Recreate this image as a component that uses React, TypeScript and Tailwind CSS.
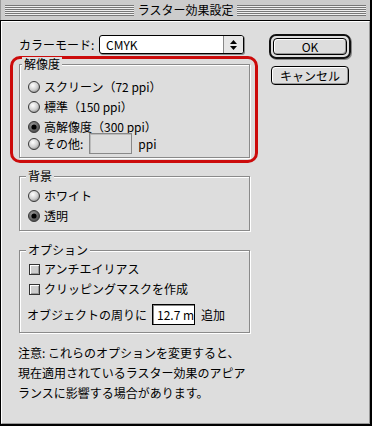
import React from "react";

const Radio = ({ checked = false }: { checked?: boolean }) => (
  <svg width="12" height="12" viewBox="0 0 12 12" className="shrink-0">
    <defs>
      <radialGradient id="rgOff" cx="40%" cy="35%" r="70%">
        <stop offset="0" stopColor="#ffffff" />
        <stop offset="0.6" stopColor="#d0d0d0" />
        <stop offset="1" stopColor="#8a8a8a" />
      </radialGradient>
      <radialGradient id="rgOn" cx="40%" cy="35%" r="70%">
        <stop offset="0" stopColor="#a0a0a0" />
        <stop offset="1" stopColor="#444444" />
      </radialGradient>
    </defs>
    <circle cx="6" cy="6" r="5.5" fill={checked ? "url(#rgOn)" : "url(#rgOff)"} stroke="#3a3a3a" strokeWidth="1" />
    {checked && <circle cx="6" cy="6" r="2.6" fill="#000" />}
  </svg>
);

const Checkbox = () => (
  <div className="w-[11px] h-[11px] shrink-0 border border-[#333] bg-[#cccccc] shadow-[inset_1px_1px_0_#fff,inset_-1px_-1px_0_#999]" />
);

const Group = ({
  title,
  titleClass,
  className,
  children,
}: {
  title: string;
  titleClass: string;
  className: string;
  children: React.ReactNode;
}) => (
  <div className={`relative border border-[#8a8a8a] shadow-[inset_1px_1px_0_#fff,1px_1px_0_#fff] ${className}`}>
    <span className={`absolute -top-[8px] bg-[#dddddd] px-[2px] leading-[14px] ${titleClass}`}>{title}</span>
    {children}
  </div>
);

const Btn = ({ className, children }: { className: string; children: React.ReactNode }) => (
  <div
    className={`flex items-center justify-center border border-black rounded-[4px] bg-[#dddddd] shadow-[inset_1px_1px_0_#fff,inset_-1px_-1px_0_#999] ${className}`}
  >
    {children}
  </div>
);

const Stripes = () => (
  <div className="flex-1 h-[11px] flex flex-col justify-between bg-[#eeeeee]">
    <div className="h-px bg-[#777]" />
    <div className="h-px bg-[#777]" />
    <div className="h-px bg-[#777]" />
    <div className="h-px bg-[#777]" />
    <div className="h-px bg-[#777]" />
    <div className="h-px bg-[#777]" />
  </div>
);

export default function App() {
  return (
    <div className="w-[372px] h-[426px] bg-[#dddddd] flex flex-col text-[12px] text-black font-['Noto_Sans_CJK_JP','Noto_Sans',sans-serif] leading-[14px]">
      {/* title bar */}
      <div className="h-[20px] shrink-0 bg-[#cccccc] border-l border-[#999] border-r-2 border-r-black flex items-center pl-[4px] pr-[4px]">
        <Stripes />
        <span className="px-[4px] leading-[20px]">ラスター効果設定</span>
        <Stripes />
      </div>
      <div className="h-px shrink-0 bg-black" />
      {/* body */}
      <div className="flex-1 flex flex-col border-l border-black border-r-2 border-r-black border-b-2 border-b-black">
        <div className="flex-1 flex flex-col border-l border-t border-white border-r border-b border-r-[#999] border-b-[#999]">
          <div className="flex pl-[8px] pt-[12px]">
            {/* left column */}
            <div className="w-[248px] flex flex-col">
              <div className="mt-px flex items-center h-[19px] pl-[9px]">
                <span className="w-[80px] whitespace-nowrap">カラーモード:</span>
                <div className="w-[145px] h-[19px] flex border border-black rounded-[3px] bg-white shadow-[1px_1px_0_#888]">
                  <div className="flex-1 pl-[6px] leading-[17px]">CMYK</div>
                  <div className="w-[20px] border-l border-[#888] bg-[#e6e6e6] rounded-r-[2px] flex items-center justify-center">
                    <svg width="7" height="10" viewBox="0 0 7 10">
                      <polygon points="3.5,0 7,4 0,4" fill="#000" />
                      <polygon points="0,6 7,6 3.5,10" fill="#000" />
                    </svg>
                  </div>
                </div>
              </div>
              <div className="mt-[2px] w-[248px] h-[107px] border-[3px] border-[#cc0b0b] rounded-[10px] pt-[5px] pl-[6px]">
                <Group title="解像度" titleClass="left-[2px]" className="w-[231px] h-[94px] pt-[12px] pl-[8px]">
                  <div className="h-[20px] flex items-center gap-[4px]">
                    <Radio />
                    <span>スクリーン（72 ppi）</span>
                  </div>
                  <div className="h-[20px] flex items-center gap-[4px]">
                    <Radio />
                    <span>標準（150 ppi）</span>
                  </div>
                  <div className="h-[20px] flex items-center gap-[4px]">
                    <Radio checked />
                    <span>高解像度（300 ppi）</span>
                  </div>
                  <div className="-mt-[4px] h-[21px] flex items-center gap-[4px]">
                    <Radio />
                    <span>その他:</span>
                    <div className="ml-[2px] w-[43px] h-[21px] border border-[#888] bg-[#dddddd] shadow-[inset_1px_1px_0_#bbb]" />
                    <span className="ml-[2px]">ppi</span>
                  </div>
                </Group>
              </div>
              <Group title="背景" titleClass="left-[6px]" className="mt-[13px] ml-[9px] w-[231px] h-[55px] pt-[9px] pl-[8px]">
                <div className="h-[20px] flex items-center gap-[4px]">
                  <Radio />
                  <span>ホワイト</span>
                </div>
                <div className="h-[20px] flex items-center gap-[4px]">
                  <Radio checked />
                  <span>透明</span>
                </div>
              </Group>
              <Group title="オプション" titleClass="left-[6px]" className="mt-[19px] ml-[9px] w-[231px] h-[83px] pt-[8px] pl-[7px]">
                <div className="h-[20px] pl-[2px] flex items-center gap-[4px]">
                  <Checkbox />
                  <span>アンチエイリアス</span>
                </div>
                <div className="h-[20px] pl-[2px] flex items-center gap-[4px]">
                  <Checkbox />
                  <span>クリッピングマスクを作成</span>
                </div>
                <div className="mt-[5px] h-[21px] flex items-center">
                  <span className="whitespace-nowrap">オブジェクトの周りに</span>
                  <div className="ml-[5px] w-[43px] h-[21px] border border-black bg-white overflow-hidden whitespace-nowrap pl-[4px] leading-[19px] shadow-[inset_1px_1px_0_#888]">
                    12.7 mm
                  </div>
                  <span className="ml-[6px]">追加</span>
                </div>
              </Group>
            </div>
            {/* right column */}
            <div className="ml-[11px] flex flex-col items-center">
              <div className="w-[82px] h-[25px] rounded-[7px] border-2 border-[#111] p-[2px] shadow-[1px_1px_0_#888]">
                <Btn className="w-full h-full leading-[14px]">OK</Btn>
              </div>
              <Btn className="mt-[7px] w-[78px] h-[19px]">キャンセル</Btn>
            </div>
          </div>
          <div className="mt-[10px] pl-[16px] leading-[20px]">
            <p>注意: これらのオプションを変更すると、</p>
            <p>現在適用されているラスター効果のアピア</p>
            <p>ランスに影響する場合があります。</p>
          </div>
        </div>
      </div>
    </div>
  );
}
